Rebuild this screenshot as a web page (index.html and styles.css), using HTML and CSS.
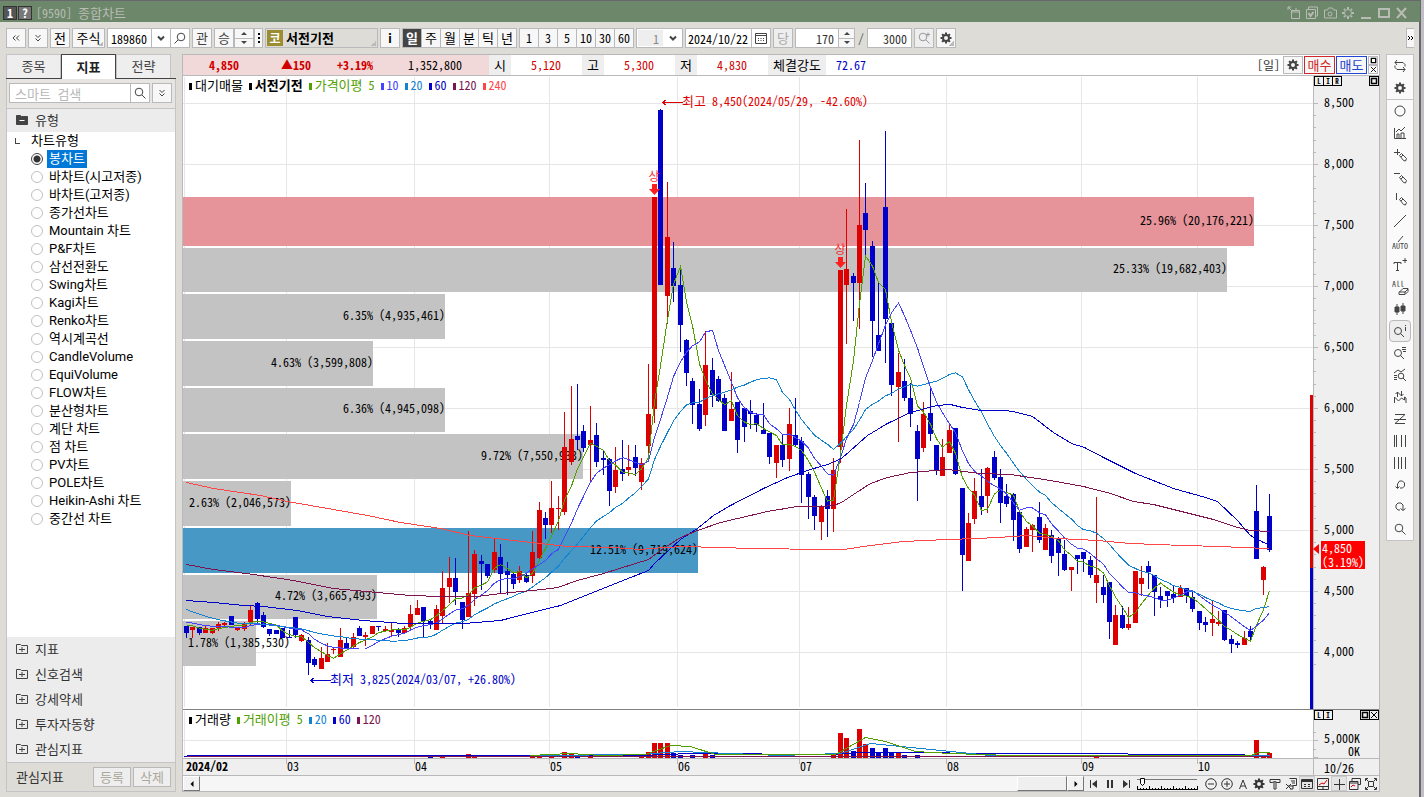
FILE: index.html
```html
<!DOCTYPE html>
<html lang="ko">
<head>
<meta charset="utf-8">
<title>[9590] 종합차트</title>
<link rel="stylesheet" href="styles.css">
</head>
<body>
<svg class="defs" aria-hidden="true">
  <symbol id="gear" viewBox="0 0 12 12"><circle cx="6" cy="6" r="3" fill="none" stroke="currentColor" stroke-width="2"/><path d="M6 .5v2M6 9.500v2M.5 6h2M9.500 6h2M2.100 2.100l1.400 1.400M8.500 8.500l1.400 1.400M9.900 2.100L8.500 3.500M3.500 8.500l-1.400 1.400" stroke="currentColor" stroke-width="2"/></symbol>
  <symbol id="search" viewBox="0 0 12 12"><circle cx="5" cy="5" r="3.800"/><path d="M8 8l3.500 3.500"/></symbol>
  <symbol id="down2" viewBox="0 0 12 12"><path d="M3.500 3L6 5.500 8.500 3M3.500 6.500L6 9l2.500-2.500"/></symbol>
  <symbol id="chev" viewBox="0 0 12 12"><path d="M3 4.500l3 3 3-3" stroke-width="2"/></symbol>
  <symbol id="folder" viewBox="0 0 12 12"><path d="M.5 10.500v-9h4l1 1h6v8zM3 6.500h6M6 4v5"/></symbol>
  <symbol id="pencil" viewBox="0 0 14 14"><path d="M6.500 7.500l2-2 5 5-1 2.500-2-.5-4-5zM8 9l2-2"/></symbol>
  <symbol id="box" viewBox="0 0 8 8"><path d="M1.500 1.500h5v5h-5z" stroke-width="1.500"/></symbol>
  <symbol id="cross" viewBox="0 0 8 8"><path d="M1 1l6 6M7 1L1 7"/></symbol>
</svg>
<div class="window">
  <header class="title">
    <span class="badge">1</span><span class="badge badge-dim">?</span>
    <h1>[9590] <span class="ko">종합차트</span></h1>
    <div class="title-icons">
      <svg viewBox="0 0 14 14"><path d="M4.500 4.500h8v8h-8zM4.500 6h8M1 1l4 4M1 4V1h3M9 2v3"/></svg>
      <svg viewBox="0 0 14 14"><path d="M3.500 3.500V1h9v9h-2M1.500 3.500h9v9h-9z"/><path d="M3.500 7l2 3 3-4" stroke-width="2"/></svg>
      <svg viewBox="0 0 14 14"><path d="M1.500 4h3l1-2h4l1 2h3v8h-12z"/><circle cx="7" cy="8" r="2"/></svg>
      <svg viewBox="0 0 14 14"><circle cx="7" cy="7" r="3.500"/><path d="M7 1v2M7 11v2M1 7h2M11 7h2M3 3l1 1M10 10l1 1M11 3l-1 1M4 10l-1 1" stroke-width="2"/></svg>
      <svg class="win" viewBox="0 0 14 14"><path d="M2 12h10"/></svg>
      <svg class="win" viewBox="0 0 14 14"><path d="M2 3h10v8H2z"/></svg>
      <svg class="win" viewBox="0 0 14 14"><path d="M2 2l9 10M11 2L2 12"/></svg>
    </div>
  </header>

  <div class="toolbar">
    <button class="btn" aria-label="이전"><svg class="ico"><use href="#down2" transform="rotate(90 6 6)"/></svg></button>
    <button class="btn" aria-label="펼치기"><svg class="ico"><use href="#down2"/></svg></button>
    <button class="btn ko">전</button>
    <button class="btn wide corner ko">주식</button>
    <div class="combo code"><input aria-label="종목코드" value="189860"><button aria-label="목록"><svg class="ico"><use href="#chev"/></svg></button><button aria-label="찾기"><svg class="ico"><use href="#search" transform="matrix(-1 0 0 1 12 0)"/></svg></button></div>
    <button class="btn dim ko">관</button>
    <div class="joined"><button class="btn dim ko">승</button><span class="spin"><button class="inc" aria-label="위"></button><button class="dec" aria-label="아래"></button></span><button class="btn dots" aria-label="더보기"><svg viewBox="0 0 4 12"><path d="M2 1v10" stroke-width="2" stroke-dasharray="2"/></svg></button></div>
    <div class="stock corner"><span class="market">코</span><b class="ko">서전기전</b></div>
    <button class="btn"><b>i</b></button>
    <div class="seg ko"><button class="on">일</button><button>주</button><button>월</button><button>분</button><button>틱</button><button>년</button></div>
    <div class="seg"><button>1</button><button>3</button><button>5</button><button>10</button><button>30</button><button>60</button></div>
    <div class="combo unit"><select aria-label="주기" disabled><option>1</option></select><svg class="ico"><use href="#chev"/></svg></div>
    <div class="combo date"><input aria-label="날짜" value="2024/10/22"><button aria-label="달력"><svg class="ico" viewBox="0 0 12 12"><path d="M.5 1.500h11v10H.5zM.5 3.500h11M3 6.500h1m1.500 0h1m1.500 0h1M3 8.500h1m1.500 0h1m1.500 0h1"/></svg></button></div>
    <button class="btn ko" disabled>당</button>
    <div class="combo count"><input aria-label="표시 개수" value="170"><span class="spin"><button class="inc" aria-label="늘리기"></button><button class="dec" aria-label="줄이기"></button></span></div>
    <span class="slash">/</span>
    <div class="combo total"><input aria-label="전체 개수" value="3000"></div>
    <button class="btn" disabled aria-label="확대"><svg class="ico"><use href="#search"/><path d="M8 2.500h4M10 .5v4"/></svg></button>
    <button class="btn corner" aria-label="설정"><svg class="ico"><use href="#gear"/></svg></button>
    <button class="more" aria-label="더보기"><svg viewBox="0 0 6 12"><path d="M1 4l2 2-2 2M4 4l2 2-2 2"/></svg></button>
  </div>

  <div class="body">
    <aside class="side">
      <div class="tabs"><button>종목</button><button class="on">지표</button><button>전략</button></div>
      <div class="side-box">
        <div class="find"><div class="combo"><input class="ko" aria-label="스마트 검색" placeholder="스마트 검색"><button aria-label="검색"><svg class="ico"><use href="#search"/></svg></button></div><button class="btn" aria-label="펼치기"><svg class="ico"><use href="#down2"/></svg></button></div>
        <h2 class="group top"><svg class="ico" viewBox="0 0 12 12"><path d="M.5 10.500v-9h4l1 1h6v8z" fill="currentColor"/><path class="cut" d="M3.500 6.500h5"/></svg>유형</h2>
        <div class="list" id="types"><p><i></i>차트유형</p></div>
        <div class="groups">
          <h2 class="group"><svg class="ico"><use href="#folder"/></svg>지표</h2>
          <h2 class="group"><svg class="ico"><use href="#folder"/></svg>신호검색</h2>
          <h2 class="group"><svg class="ico"><use href="#folder"/></svg>강세약세</h2>
          <h2 class="group"><svg class="ico"><use href="#folder"/></svg>투자자동향</h2>
          <h2 class="group"><svg class="ico"><use href="#folder"/></svg>관심지표</h2>
        </div>
        <div class="foot"><span>관심지표</span><button disabled>등록</button><button disabled>삭제</button></div>
      </div>
    </aside>

    <main class="main">
      <div class="quote">
        <div class="pink"><b>4,850</b><b>▲150</b><b>+3.19%</b><span>1,352,800</span></div>
        <span class="key">시</span><span class="val up">5,120</span>
        <span class="key">고</span><span class="val up">5,300</span>
        <span class="key">저</span><span class="val up">4,830</span>
        <span class="key long">체결강도</span><span class="val rate">72.67</span>
        <span class="day">[일]</span>
        <button class="qb" aria-label="설정"><svg class="ico"><use href="#gear"/></svg></button>
        <button class="qb buy">매수</button><button class="qb sell">매도</button>
        <span class="mini"><button aria-label="최대화"><svg><use href="#box"/></svg></button><button aria-label="닫기"><svg><use href="#cross"/></svg></button></span>
      </div>
      <div class="pane price">
        <div class="plot">
          <svg id="price" class="canvas"></svg>
          <div class="legend"><span class="ko">대기매물</span><b class="ko">서전기전</b><span class="c5"><span class="ko">가격이평</span> 5</span><span class="c10">10</span><span class="c20">20</span><span class="c60">60</span><span class="c120">120</span><span class="c240">240</span></div>
        </div>
        <div class="axis"><svg id="axis" class="canvas"></svg>
          <div class="flags"><span><i>L</i><i>I</i><i>R</i></span><span><svg><use href="#box"/></svg></span></div>
          <div class="now"><span>4,850</span><span>(3.19%)</span></div>
        </div>
      </div>
      <div class="pane volume">
        <div class="plot">
          <svg id="volume" class="canvas"></svg>
          <div class="legend"><span class="ko">거래량</span><span class="c5"><span class="ko">거래이평</span> 5</span><span class="c20">20</span><span class="c60">60</span><span class="c120">120</span></div>
        </div>
        <div class="axis"><svg id="vaxis" class="canvas"></svg>
          <div class="flags"><span><i>L</i><i>I</i></span><span><svg><use href="#box"/></svg><svg><use href="#cross"/></svg></span></div>
        </div>
      </div>
      <div class="dates"><div class="plot"><svg id="dates" class="canvas"></svg></div><div class="axis">10/26</div></div>
      <div class="scroll">
        <button class="sb" aria-label="왼쪽"><svg viewBox="0 0 8 8"><path d="M5.500 1v6l-3-3z"/></svg></button><div class="track"><span class="thumb"></span></div><button class="sb" aria-label="오른쪽"><svg viewBox="0 0 8 8"><path d="M2.500 1v6l3-3z"/></svg></button>
        <div class="play">
          <svg viewBox="0 0 12 12"><path d="M2.500 2v8"/><path d="M9 2v8L4 6z" fill="currentColor" stroke="none"/></svg>
          <svg viewBox="0 0 12 12"><path d="M4 2v8M8 2v8" stroke-width="2"/></svg>
          <svg viewBox="0 0 12 12"><path d="M9.500 2v8"/><path d="M3 2v8l5-4z" fill="currentColor" stroke="none"/></svg>
        </div>
        <svg class="slider" viewBox="0 0 62 14"><path d="M0 2.500h60" stroke="#777"/><path d="M3.500 1.500h4v5l-2 2-2-2z" fill="#fff"/><path d="M.5 13V9M3.500 13v-2M6.500 13v-2M9.500 13v-2M12.500 13V9M15.500 13v-2M18.500 13v-2M21.500 13v-2M24.500 13V9M27.500 13v-2M30.500 13v-2M33.500 13v-2M36.500 13V9M39.500 13v-2M42.500 13v-2M45.500 13v-2M48.500 13V9M51.500 13v-2M54.500 13v-2M57.500 13v-2M60.500 13V9M0 12.500h61"/></svg>
        <div class="tools-b">
          <button aria-label="축소"><svg viewBox="0 0 12 12"><circle cx="6" cy="6" r="5.300"/><path d="M3 6h6"/></svg></button>
          <button aria-label="확대"><svg viewBox="0 0 12 12"><circle cx="6" cy="6" r="5.300"/><path d="M3 6h6M6 3v6"/></svg></button>
          <button aria-label="글자"><svg viewBox="0 0 12 12"><path d="M2.500 11L6 2l3.500 9M4 8h4"/></svg></button>
          <button aria-label="설정"><svg viewBox="0 0 12 12"><use href="#gear"/></svg></button>
          <button aria-label="도구"><svg viewBox="0 0 12 12"><path d="M1 1.500h10v3H8l-2-1-3 1H1zM5 4v7h2V4"/></svg></button>
          <button aria-label="엑셀"><svg viewBox="0 0 12 12"><path d="M4.500.5h7v7h-4M6 3h4M7 5h3M1 6l5 5M6 6l-5 5M3 8h5v3H5"/></svg></button>
          <button class="on" aria-label="표"><svg viewBox="0 0 12 12"><path d="M.5 1.500h11v9H.5zM.5 2.500h11M.5 3.500h11M3 6.500h2M3 8.500h2M7 6.500h2M7 8.500h2"/></svg></button>
          <button aria-label="차트"><svg viewBox="0 0 12 12"><path d="M.5.5h11v11H.5zM.5 8.500h11M6 9v3"/><path d="M2 7l3-2 2 1 3-4" stroke="#d00"/></svg></button>
          <button class="on" aria-label="십자선"><svg viewBox="0 0 12 12"><path d="M6.500 1v11M1 6.500h11"/></svg></button>
          <button aria-label="창"><svg viewBox="0 0 12 12"><path d="M3 3V.5h8.500v6H9M.5 3.500H9v8H.5zM.5 5H9"/><path d="M2 9l2-2 2 1" stroke="#d00"/></svg></button>
          <button aria-label="전체화면"><svg viewBox="0 0 12 12"><path d="M3.500 3.500h5v5h-5zM.5 3V.5H3M9 .5h2.500V3M.5 9v2.500H3M9 11.500h2.500V9M1 1l2 2M11 1L9 3M1 11l2-2M11 11L9 9"/></svg></button>
        </div>
      </div>
    </main>

    <nav class="rail">
      <button aria-label="새로고침"><svg viewBox="0 0 14 14"><path d="M4 1L2 3.500 4 6M2 3.500h8l2 2v2M10 8l2 2.500-2 2.500M12 10.500H4l-2-2v-2"/></svg></button>
      <button aria-label="설정"><svg viewBox="-1 -1 14 14"><use href="#gear" width="12" height="12"/></svg></button>
      <hr>
      <button aria-label="원"><svg viewBox="0 0 14 14"><circle cx="7" cy="7" r="5"/></svg></button>
      <button aria-label="지표"><svg viewBox="0 0 14 14"><path d="M1.500 2v10.500H13M3 6l3-3 2 2 4-4M4 12V8h2v4M8 12V7h3v5"/></svg></button>
      <button aria-label="십자 그리기"><svg viewBox="0 0 14 14"><path d="M1 4.500h6M4.500 1v6"/><use href="#pencil" width="14" height="14"/></svg></button>
      <button aria-label="수평선"><svg viewBox="0 0 14 14"><path d="M1 3.500h6"/><use href="#pencil" width="14" height="14"/></svg></button>
      <button aria-label="수직선"><svg viewBox="0 0 14 14"><path d="M3.500 1v7"/><use href="#pencil" width="14" height="14"/></svg></button>
      <button aria-label="추세선"><svg viewBox="0 0 14 14"><path d="M1 13L13 1"/></svg></button>
      <button class="lab"><svg viewBox="0 0 14 6"><path d="M5 6l5-6"/></svg><span>AUTO</span></button>
      <button aria-label="문자"><svg viewBox="0 0 14 14"><path d="M1 6V4.500h7V6M4.500 4.500v8M3 12.500h3M9.500 2.500h5M12 0v5"/></svg></button>
      <button class="lab all"><span>All</span><svg viewBox="0 0 14 7"><path d="M4 6.500h6l3-3v-3H8l-4 4zM4 4h6l3-3M10 4v2"/></svg></button>
      <button aria-label="봉"><svg viewBox="0 0 14 14"><path d="M4 2v11M10 1v11"/><path d="M2 5h4v5H2zM8 4h4v5H8z" fill="currentColor"/></svg></button>
      <button class="sel" aria-label="정보"><svg viewBox="0 0 14 14"><circle cx="5" cy="7" r="3.500"/><path d="M7.500 9.500L11 13M12.500 3v4M12.500 1v1"/></svg></button>
      <button aria-label="목록 검색"><svg viewBox="0 0 14 14"><circle cx="5" cy="7" r="3.500"/><path d="M7.500 9.500L11 13M9 1.500h4M9 3.500h4M10 5.500h3"/></svg></button>
      <button aria-label="차트 검색"><svg viewBox="0 0 14 14"><path d="M1 5l4-3 3 2 4-3M1 7.500h3M1 9.500h3M1 11.500h3"/><circle cx="8" cy="8" r="2.800"/><path d="M10 10l3 3"/></svg></button>
      <button aria-label="신호"><svg viewBox="0 0 14 14"><path d="M1.500 13V7l4 4 3-3 3 2V7l1.500 1v5M4.500 7V2M2.500 4l2-2 2 2M8.500 1v5M6.500 4l2 2 2-2"/></svg></button>
      <button aria-label="지그재그"><svg viewBox="0 0 14 14"><path d="M2 2.500h10L2 11.500h10M1 7.500h12"/></svg></button>
      <button aria-label="시간선"><svg viewBox="0 0 14 14"><path d="M1.500 1v12M3.500 1v12M8.500 1v12M12.500 1v12"/></svg></button>
      <button aria-label="등간격선"><svg viewBox="0 0 14 14"><path d="M1.500 1v12M5.500 1v12M8.500 1v12M12.500 1v12"/></svg></button>
      <button aria-label="실행취소"><svg viewBox="0 0 14 14"><path d="M4.500 10V6l2-3h3l2 2v3l-2 2H7M2.500 8.500l2 2 2-2"/></svg></button>
      <button aria-label="다시실행"><svg viewBox="0 0 14 14"><path d="M7 10H5L3 8V5l2-2h3l2 2v5M7.500 8.500l2.500 2 2.500-2"/></svg></button>
      <button aria-label="돋보기"><svg viewBox="-1 -1 14 14"><use href="#search" width="12" height="12"/></svg></button>
    </nav>
  </div>
</div>
<script src="chart.js"></script>
</body>
</html>
```
FILE: styles.css
```css
* { box-sizing: border-box; }
body, h1, h2, p { margin: 0; font-weight: normal; }
body, button, input, select {
  font-family: "Noto Sans Mono CJK KR", "Noto Sans CJK KR", sans-serif;
  font-size: 12px;
}
body { color: #000; background: #dddcd6; }
button, input, select { margin: 0; padding: 0; border: 0; background: none; color: inherit; }
input, select { min-width: 0; outline: 0; border-radius: 0; }
svg { display: block; fill: none; stroke: currentColor; }
.ko, .ko button { font-size: 13px; }
.defs { position: absolute; width: 0; height: 0; }
.ico { width: 12px; height: 12px; color: #444; flex: none; }

.window { display: flex; flex-direction: column; height: 100vh; min-height: 640px; border-right: 3px solid #c0c0c4; box-shadow: inset -2px 0 #68686c; }
.title { display: flex; align-items: center; gap: 1px; height: 22px; padding: 2px 11px 0 3px; margin-right: 1px; background: #6d876a; border-top: 1px solid #68686c; color: #b8bcb4; flex: none; }
.badge { width: 14px; height: 14px; border: 1px solid #333; background: #555; color: #fff; font-weight: bold; line-height: 12px; text-align: center; }
.badge-dim { background: #777; }
.title h1 { font-size: 12px; margin-left: 3px; line-height: 16px; }
.title-icons { display: flex; gap: 4px; margin-left: auto; }
.title-icons svg { width: 14px; height: 14px; }
.title-icons .win { stroke-width: 2; }

.toolbar { display: flex; align-items: center; gap: 2px; height: 32px; padding: 0 7px 0 6px; flex: none; }
.btn, .combo, .seg, .spin, .stock { height: 20px; border: 1px solid #b9b9bb; background: #f7f7f7; flex: none; }
.btn { display: flex; align-items: center; justify-content: center; width: 20px; line-height: 18px; }
.btn.wide { width: 33px; }
.btn.dim { color: #444; }
.btn:disabled { background: #eee; color: #aaa; }
.btn:disabled .ico { color: #999; }
.corner { background-image: linear-gradient(135deg, transparent 50%, #bbb 50%); background-size: 5px 5px; background-repeat: no-repeat; background-position: right 1px bottom 1px; }
.combo { display: flex; background: #fff; }
.combo input { flex: 1; width: 0; padding: 0 3px; }
.combo > button { display: flex; align-items: center; justify-content: center; width: 19px; border-left: 1px solid #b9b9bb; }
.code { width: 83px; }
.joined { display: flex; }
.spin { display: flex; flex-direction: column; width: 20px; }
.spin button { display: flex; align-items: center; justify-content: center; flex: 1; height: 9px; }
.spin button::before { content: ""; border: 3px solid transparent; }
.spin .inc::before { border-top: 0; border-bottom-color: #444; }
.spin .dec::before { border-bottom: 0; border-top-color: #444; }
.spin .dec { border-top: 1px solid #b9b9bb; }
.joined .dots { width: 9px; }
.dots svg { width: 4px; height: 12px; }
.stock { display: flex; align-items: center; width: 113px; padding: 1px; gap: 3px; background-color: #dddcd6; line-height: 16px; }
.market { width: 16px; height: 16px; background: #9c8c32; color: #fff; font-weight: bold; line-height: 16px; text-align: center; }
.seg { display: flex; width: 115px; }
.seg button { flex: 1; line-height: 18px; border-left: 1px solid #b9b9bb; }
.seg button:first-child { border-left: 0; }
.seg .on { background: #444; color: #fff; font-weight: bold; }
.unit { width: 47px; align-items: center; }
.unit select { flex: 1; height: 16px; margin: 1px; padding-right: 4px; appearance: none; background: #eee; color: #888; text-align-last: right; opacity: 1; }
.unit .ico { margin: 0 3px; }
.date { width: 86px; }
.date input { padding: 0 2px; }
.count { width: 60px; }
.count input, .total input { text-align: right; color: #333; padding-right: 4px; }
.count .spin { width: 16px; height: 18px; border-width: 0 0 0 1px; }
.slash { width: 8px; text-align: center; color: #555; }
.total { width: 45px; }
.more { width: 8px; height: 20px; margin-left: auto; border: 1px solid #b9b9bb; border-right: 0; background: #f7f7f7; }
.more svg { width: 6px; height: 12px; }

.body { display: flex; flex: 1; min-height: 0; gap: 6px; padding: 0 7px 5px 6px; }
.side { display: flex; flex-direction: column; width: 170px; flex: none; }
.tabs { display: flex; height: 25px; border-bottom: 1px solid #444; flex: none; }
.tabs button { width: 55px; height: 24px; padding-bottom: 2px; border: 1px solid #c4c4c6; border-bottom: 0; background: #eee; color: #444; font-size: 13px; }
.tabs .on { height: 25px; border-color: #444; background: #fff; color: #222; font-weight: bold; }
.side-box { display: flex; flex-direction: column; flex: 1; min-height: 0; border: 1px solid #c4c4c6; border-top: 0; }
.find { display: flex; gap: 2px; height: 29px; padding: 4px 3px 5px 2px; background: #e6e5e1; flex: none; }
.find .combo { flex: 1; }
.find input { padding: 0 5px; }
.find input::placeholder { color: #b8b8b8; opacity: 1; }
.group { display: flex; align-items: center; gap: 7px; height: 25px; padding: 0 0 2px 9px; background: #ececec; color: #333; font-size: 13px; line-height: 20px; flex: none; }
.group.top { height: 24px; border-top: 1px solid #c4c4c6; }
.cut { stroke: #fff; }
.list { flex: 1; min-height: 0; background: #fff; font-family: Roboto, "Noto Sans CJK KR", sans-serif; font-size: 13px; line-height: 18px; overflow: hidden; }
.list p, .list label { display: flex; align-items: center; height: 18px; }
.list p { padding-left: 8px; gap: 11px; }
.list p i { width: 5px; height: 6px; border: solid #444; border-width: 0 0 1px 1px; }
.list label { padding-left: 24px; gap: 4px; }
.list input { width: 12px; height: 12px; appearance: none; border: 1px solid #c0c0c0; border-radius: 50%; background: #fff; }
.list input:checked { border-color: #444; background: radial-gradient(#333 0 3px, #fff 4px); }
.list span { padding: 0 2px; }
.list input:checked + span { background: #0078d7; color: #fff; }
.foot { display: flex; align-items: center; gap: 2px; height: 29px; padding: 0 4px 0 9px; border-top: 1px solid #c4c4c6; color: #333; font-size: 13px; line-height: 20px; flex: none; }
.foot span { margin-right: auto; }
.foot button { width: 38px; height: 20px; border: 1px solid #b9b9bb; background: #eee; color: #aaa79c; font-size: 13px; line-height: 16px; }

.main { display: flex; flex-direction: column; flex: 1; min-width: 0; border: 1px solid #b9b9bb; background: #fff; }
.quote { display: flex; align-items: center; height: 21px; border-bottom: 1px solid #b9b9bb; line-height: 20px; flex: none; }
.pink { display: flex; width: 306px; background: #f2d9d9; text-align: right; }
.pink b { color: #d00000; width: 62px; }
.pink b:first-child { width: 56px; }
.pink b:nth-child(2) { width: 72px; }
.pink span { width: 89px; }
.key { width: 22px; background: #eee; text-align: center; font-size: 13px; }
.key.long { width: 58px; }
.val { width: 71px; padding-right: 21px; text-align: right; }
.rate { color: #0000c8; padding-right: 31px; }
.up { color: #d00000; }
.day { margin-left: auto; padding-right: 2px; color: #333; }
.qb { display: flex; align-items: center; justify-content: center; width: 20px; height: 18px; margin-left: 1px; border: 1px solid #b9b9bb; background: #f7f7f7; font-size: 13px; line-height: 16px; }
.buy, .sell { width: 31px; color: #d02828; border-color: #d02828; }
.sell { color: #1e46d2; border-color: #1e46d2; }
.mini { display: flex; flex-direction: column; width: 10px; margin: 0 1px; }
.mini button { display: flex; align-items: center; justify-content: center; height: 9px; border: 1px solid #b9b9bb; }
.mini svg { width: 7px; height: 7px; }

.pane { display: flex; min-height: 0; }
.price { flex: 1; border-bottom: 1px solid #808080; }
.volume { height: 49px; border-bottom: 1px solid #b9b9bb; flex: none; }
.plot { position: relative; flex: 1; min-width: 0; }
.axis { position: relative; width: 66px; border-left: 1px solid #b9b9bb; background: #efefef; flex: none; }
.canvas { position: absolute; inset: 0; width: 100%; height: 100%; overflow: hidden; }
.canvas text { stroke: none; font-size: 12px; }
.canvas .ko { font-size: 13px; }
.legend { position: relative; display: flex; gap: 6px; padding: 0 6px; line-height: 18px; }
.legend > *::before { content: ""; display: inline-block; width: 3px; height: 7px; margin-right: 3px; background: currentColor; }
.c5 { color: #50a000; } .c10 { color: #4444ff; } .c20 { color: #1482d2; }
.c60 { color: #0000c8; } .c120 { color: #7d1450; } .c240 { color: #ff4646; }
.flags { position: relative; display: flex; justify-content: space-between; align-items: flex-start; }
.flags span { display: flex; height: 10px; border: 1px solid #000; }
.flags i, .flags svg { width: 8px; height: 8px; }
.flags i { font-size: 7px; font-style: normal; font-weight: bold; line-height: 8px; text-align: center; }
.flags i + i, .flags svg + svg { width: 9px; border-left: 1px solid #000; }
.now { position: absolute; left: 7px; top: 73.500%; display: flex; flex-direction: column; padding: 0 1px; background: #f00; color: #fff; line-height: 14px; }
.now::before { content: ""; position: absolute; left: -8px; top: 3px; border: 5px solid transparent; border-left: 0; border-right: 6px solid #f00; }
.dates { display: flex; height: 17px; border-bottom: 1px solid #b9b9bb; background: #efefef; flex: none; }
.dates .axis { padding-left: 10px; line-height: 17px; }
.scroll { display: flex; align-items: center; height: 15px; background: #efefef; color: #333; flex: none; }
.sb { display: flex; align-items: center; justify-content: center; width: 17px; height: 15px; border: 1px solid; border-color: #fff #777 #777 #fff; background: #f2f2f2; color: #000; }
.sb svg { width: 8px; height: 8px; fill: #000; stroke: none; }
.track { display: flex; justify-content: flex-end; flex: 1; height: 15px; background: #f6f6f6; }
.thumb { width: 50px; border: 1px solid; border-color: #fff #777 #777 #fff; background: #efefef; }
.play { display: flex; gap: 4px; padding: 0 5px 0 4px; }
.play svg { width: 12px; height: 12px; }
.slider { width: 62px; height: 14px; color: #000; }
.tools-b { display: flex; padding-left: 4px; }
.tools-b button { display: flex; align-items: center; justify-content: center; width: 16px; height: 15px; color: #333; }
.tools-b svg { width: 12px; height: 12px; }
.tools-b .on { background: #e4e4e4; box-shadow: inset 0 0 0 1px #ccc; }

.rail { align-self: flex-start; width: 28px; padding: 0 2px; border: 1px solid #c4c4c6; background: #fafafa; color: #444; }
.rail button { display: flex; align-items: center; justify-content: center; width: 22px; height: 22px; }
.rail svg { width: 14px; height: 14px; }
.rail hr { margin: 0 -2px; border: 0; border-top: 1px solid #c4c4c6; }
.rail .sel { border: 1px solid #b9b9bb; border-radius: 4px; background: #eee; }
.rail .lab { flex-direction: column; font-size: 8px; line-height: 8px; }
.rail .lab svg { width: 14px; height: 6px; }
.rail .all span { margin-left: -4px; }
.rail .all svg { height: 7px; margin-left: 4px; }
```
FILE: chart.js
```js
// Chart space: x runs 183..1313, y runs 76..709; scaled to the pane's real size.
const NS = 'http://www.w3.org/2000/svg';
const X0 = 183, W = 1130, Y0 = 76, H = 633;
const COLORS = { R: '#dd0000', B: '#0000c8' };

const types = ['봉차트', '바차트(시고저종)', '바차트(고저종)', '종가선차트', 'Mountain 차트', 'P&F차트', '삼선전환도', 'Swing차트', 'Kagi차트', 'Renko차트', '역시계곡선', 'CandleVolume', 'EquiVolume', 'FLOW차트', '분산형차트', '계단 차트', '점 차트', 'PV차트', 'POLE차트', 'Heikin-Ashi 차트', '중간선 차트'];
types.forEach((name, i) => {
  const label = document.createElement('label');
  const radio = document.createElement('input');
  radio.type = 'radio'; radio.name = 'type'; radio.checked = i === 0;
  const text = document.createElement('span');
  text.textContent = name;
  label.append(radio, text);
  document.getElementById('types').append(label);
});

// direction, high, body top, body bottom, low
const candles = `B626,626,633,638 R627,627,630,638 B627,627,633,635 R626,628,633,633 R628,628,633,634 R622,624,628,631 R622,623,625,626 B616,616,625,625 R627,627,630,631 R622,624,629,631
R605,610,622,625 B602,603,619,623 B612,615,627,628 B629,629,634,636 B630,630,634,634 B628,628,638,638 B630,637,638,638 B617,617,635,638 R634,635,641,642 B637,640,663,675
B657,659,665,667 R647,658,669,669 R643,654,662,662 R647,649,650,654 R628,640,657,657 B638,643,648,648 R633,637,647,648 B626,628,636,636 R632,635,637,646 R626,626,634,634
B626,626,627,631 R626,629,631,632 R623,630,632,637 B628,630,633,637 R626,628,633,633 R605,614,627,630 R600,608,615,615 B607,607,621,638 B619,621,625,629 R605,609,630,630
R571,588,616,623 R557,578,587,603 B558,578,592,605 B602,602,620,629 R531,593,617,617 R550,554,594,606 B555,561,564,590 B564,564,576,578 R539,552,570,573 B544,557,574,593
B562,571,575,595 B572,574,584,589 R566,571,580,583 B572,575,582,583 R531,552,576,583 R502,510,558,560 B512,518,525,539 R481,508,525,533 R496,508,509,530 R412,447,512,515
R386,439,462,465 B384,436,440,450 B425,431,448,452 R406,440,445,482 B423,435,462,467 B451,458,460,475 B458,459,491,506 R447,470,487,493 B440,469,474,481 R445,467,470,476
B445,457,468,476 R458,463,482,490 R364,414,446,458 R197,197,409,423 B109,110,285,285 R182,237,296,324 B242,268,286,302 B268,285,325,352 B339,340,373,386 B378,381,405,424
B389,404,429,431 R331,365,415,426 B358,370,395,407 B376,379,401,402 B394,398,431,431 R372,409,421,421 B402,402,440,453 B408,408,427,442 B400,411,414,429 B413,415,425,432
B403,430,434,434 B433,433,457,464 R445,445,463,478 B434,445,460,467 R408,424,459,471 B398,435,445,446 B437,441,475,503 B472,474,497,519 B495,497,516,530 R505,506,522,540
B490,496,509,537 R458,470,509,532 R270,270,447,463 R209,269,285,344 B273,276,283,321 R140,225,283,329 B183,213,230,260 B241,246,321,357 B282,335,351,351 B131,207,319,363
B323,323,385,396 R353,372,387,442 B359,381,398,401 B383,398,414,427 B425,431,459,501 R402,414,448,452 B389,413,434,441 B445,445,470,475 R439,457,476,476 R423,430,453,453
B428,428,474,475 B488,488,555,591 R513,523,561,561 R478,491,519,524 B469,496,507,515 R467,468,496,513 B451,457,478,480 B469,477,503,523 B484,496,504,507 B493,494,520,541
B512,512,549,553 R527,529,547,547 R524,525,530,552 B502,517,540,543 R524,528,550,550 B530,535,556,563 B537,539,553,576 B540,554,570,571 R567,567,570,591 B555,555,559,574
B552,552,559,572 B556,560,575,578 R497,575,583,603 B575,587,595,603 B582,582,622,639 R605,615,645,645 B606,615,628,629 R607,624,628,630 R571,571,623,623 R566,578,584,596
B561,566,572,589 B575,575,592,616 B587,596,600,608 B591,591,596,607 B585,594,598,603 R585,588,597,597 B588,588,596,603 B590,597,609,612 B611,611,623,630 B617,622,625,632
R600,619,623,636 R611,622,624,626 B610,610,640,641 B635,639,644,653 B641,643,645,648 R631,638,645,645 B626,631,637,642 B485,511,559,559 R566,567,580,595 B494,516,550,552`
  .trim().split(/\s+/).map(s => [s[0], ...s.slice(1).split(',').map(Number)]);

// closes before the first visible candle, used by the moving averages
const history = [580, 584, 588, 591, 595, 598, 602, 605, 608, 612, 618, 618, 619, 620, 620, 622, 622, 622, 623];
const closes = history.concat(candles.map(c => c[0] === 'R' ? c[2] : c[3]));
const cx = i => Math.round(186 + i * 6.41);
const average = n => candles.map((_, i) => {
  const end = i + history.length + 1;
  return [cx(i), closes.slice(end - n, end).reduce((a, b) => a + b, 0) / n];
});
const points = s => s.split(' ').map(p => p.split(',').map(Number));
const ma60 = points('186,600 213,602 243,605 263,606 297,610 327,616 363,620 403,623 463,623 500,620 560,605 600,589 620,581 648,570 654,563 680,539 697,528 713,515 730,505 763,488 787,477 810,469 820,466 827,464 841,458 867,435 887,423 910,412 936,405 950,404 962,407 981,410 1003,410 1013,411 1032,416 1053,432 1071,443 1084,447 1103,457 1135,473 1173,488 1205,497 1217,501 1237,520 1250,535 1263,542 1268,544');
const ma120 = points('186,564 213,569 253,574 293,580 333,588 377,592 410,595 440,596 477,596 500,593 542,589 557,587 577,580 603,573 648,559 663,548 680,537 697,530 720,522 767,511 797,506 820,506 833,505 841,502 853,494 870,483 887,477 910,472 947,469 963,471 980,473 1010,474 1030,477 1050,480 1083,486 1110,493 1133,501 1153,504 1193,514 1213,519 1237,527 1250,530 1269,531');
const ma240 = points('186,482 213,488 260,495 287,501 333,509 367,515 400,522 440,528 470,535 487,537 513,540 540,543 567,546 613,547 640,549 663,547 687,546 713,547 757,548 820,549 843,549 870,545 903,541 947,539 977,538 997,537 1027,535 1057,538 1097,540 1130,543 1183,545 1220,546 1240,547 1269,548');

const months = [[286, '03'], [414, '04'], [549, '05'], [677, '06'], [799, '07'], [946, '08'], [1081, '09'], [1197, '10']];
const profile = [
  [197, 49, 1254, '25.96% (20,176,221)', '#e6939a'], [248, 44, 1227, '25.33% (19,682,403)'],
  [294, 45, 445, '6.35% (4,935,461)'], [341, 45, 373, '4.63% (3,599,808)'], [388, 44, 445, '6.36% (4,945,098)'],
  [434, 45, 583, '9.72% (7,550,933)'], [481, 45, 291, '2.63% (2,046,573)'], [528, 45, 698, '12.51% (9,719,624)', '#4898c6'],
  [575, 44, 377, '4.72% (3,665,493)'], [621, 45, 256, '1.78% (1,385,530)']];
const volumes = { 38: 2, 40: 2, 44: 4, 45: 3, 54: 2, 55: 3, 57: 3, 59: 6, 60: 4, 61: 3, 63: 2, 71: 2, 72: 6, 73: 15, 74: 15, 75: 15, 76: 5, 77: 3, 79: 3, 81: 5, 82: 3, 101: 4, 102: 25, 103: 20, 104: 7, 105: 29, 106: 14, 107: 10, 108: 5, 109: 10, 110: 5, 111: 5, 112: 3, 114: 3, 142: 3, 167: 18, 168: 2, 169: 5 };
const risingVolume = new Set([59, 74, 106, 167, 169]);

function el(svg, tag, attrs, text) {
  const node = document.createElementNS(NS, tag);
  for (const key in attrs) node.setAttribute(key, attrs[key]);
  if (text) node.textContent = text;
  svg.append(node);
  return node;
}
function surface(id, x0, w, y0, h) {
  const svg = document.getElementById(id);
  svg.replaceChildren();
  const kx = svg.clientWidth / w, ky = svg.clientHeight / h;
  const X = x => (x - x0) * kx, Y = y => (y - y0) * ky;
  return {
    rect: (x, y, rw, rh, fill) => el(svg, 'rect', { x: X(x), y: Y(y), width: rw * kx, height: rh * ky, fill, stroke: 'none', 'shape-rendering': 'crispEdges' }),
    text: (x, y, s, fill, anchor = 'start', weight = 'normal') => el(svg, 'text', { x: X(x), y: Y(y), fill, 'text-anchor': anchor, 'font-weight': weight }, s),
    line: (pts, stroke) => el(svg, 'polyline', { points: pts.map(p => X(p[0] + .5) + ',' + Y(p[1] + .5)).join(' '), stroke, fill: 'none', 'shape-rendering': 'crispEdges' }),
    shape: (pts, fill) => el(svg, 'polygon', { points: pts.map(p => X(p[0]) + ',' + Y(p[1])).join(' '), fill, stroke: 'none' })
  };
}
function note(g, x, y, word, rest, color) {
  g.line([[x, y], [x + 20, y]], color);
  g.line([[x + 4, y - 3], [x, y], [x + 4, y + 3]], color);
  const text = g.text(x + 20, y + 4, '', color);
  el(text, 'tspan', { class: 'ko' }, word);
  el(text, 'tspan', {}, ' ' + rest);
}
function draw() {
  const g = surface('price', X0, W, Y0, H);
  for (let i = 0; i < 10; i++) g.rect(X0, 103 + i * 61, W, 1, '#e6e6e6');
  [[184]].concat(months).forEach(m => g.rect(m[0], 77, 1, 630, '#e6e6e6'));
  profile.forEach(([y, h, right, label, fill]) => {
    g.rect(X0, y, right - X0, h, fill || '#c3c3c3');
    g.text(Math.max(right, 290), y + h / 2 + 3, label, '#000', 'end');
  });
  candles.forEach(([c, hi, top, bottom, lo], i) => {
    g.rect(cx(i), hi, 1, lo - hi, COLORS[c]);
    g.rect(cx(i) - 2, top, 5, bottom - top, COLORS[c]);
  });
  g.line(average(5), '#50a000');
  g.line(average(10), '#4444ff');
  g.line(average(20), '#1482d2');
  g.line(ma60, '#0000c8');
  g.line(ma120, '#7d1450');
  g.line(ma240, '#ff4646');
  note(g, 662, 102, '최고', '8,450(2024/05/29, -42.60%)', '#dd0000');
  note(g, 310, 680, '최저', '3,825(2024/03/07, +26.80%)', '#0000c8');
  [[654, 184], [840, 257]].forEach(([x, y]) => {
    g.text(x, y - 3, '상', '#ff1e1e', 'middle');
    g.shape([[x - 2, y], [x + 3, y], [x + 3, y + 5], [x + 6, y + 5], [x + .5, y + 11], [x - 5, y + 5], [x - 2, y + 5]], '#ff1e1e');
  });
  g.rect(1310, 395, 3, 173, '#dd0000');
  g.rect(1310, 568, 3, 141, '#0000c8');

  const a = surface('axis', 1314, 65, Y0, H);
  for (let i = 0; i < 47; i++) a.rect(1314, Math.round(103 + i * 12.2), i % 5 ? 2 : 4, 1, '#b9b9bb');
  for (let i = 0; i < 10; i++) a.text(1324, 107 + i * 61, (8500 - i * 500).toLocaleString('en-US'), '#000');

  const v = surface('volume', X0, W, 710, 48);
  v.rect(X0, 740, W, 1, '#e6e6e6');
  [[184]].concat(months).forEach(m => v.rect(m[0], 711, 1, 47, '#e6e6e6'));
  candles.forEach(([c], i) => {
    const h = volumes[i] || 1;
    v.rect(cx(i) - 2, 757 - h + (h > 1 ? 1 : 0), h > 1 ? 5 : 6, h, risingVolume.has(i) ? COLORS.R : COLORS[c]);
  });
  v.line(points('186,756 1269,756'), '#7d1450');
  v.line(points('186,755 640,755 690,753 830,754 860,752 1035,753 1220,754 1269,755'), '#0000c8');
  v.line(points('540,755 640,754 680,751 780,755 840,753 870,743 940,750 990,755 1269,755'), '#1482d2');
  v.line(points('530,755 570,753 600,755 645,754 670,745 690,746 715,754 835,754 865,737 885,741 915,751 950,753 1010,755 1250,755 1258,752 1269,752'), '#50a000');

  const va = surface('vaxis', 1314, 65, 710, 48);
  [732, 740, 749, 757].forEach((y, i) => va.rect(1314, y, i % 2 ? 4 : 2, 1, '#b9b9bb'));
  va.text(1360, 743, '5,000K', '#000', 'end');
  va.text(1360, 756, '0K', '#000', 'end');

  const d = surface('dates', X0, W, 759, 16);
  d.text(186, 771, '2024/02', '#000', 'start', 'bold');
  months.forEach(([x, name]) => { d.rect(x, 759, 1, 5, '#b9b9bb'); d.text(x + 1, 771, name, '#000'); });
}
draw();
addEventListener('resize', draw);
```
